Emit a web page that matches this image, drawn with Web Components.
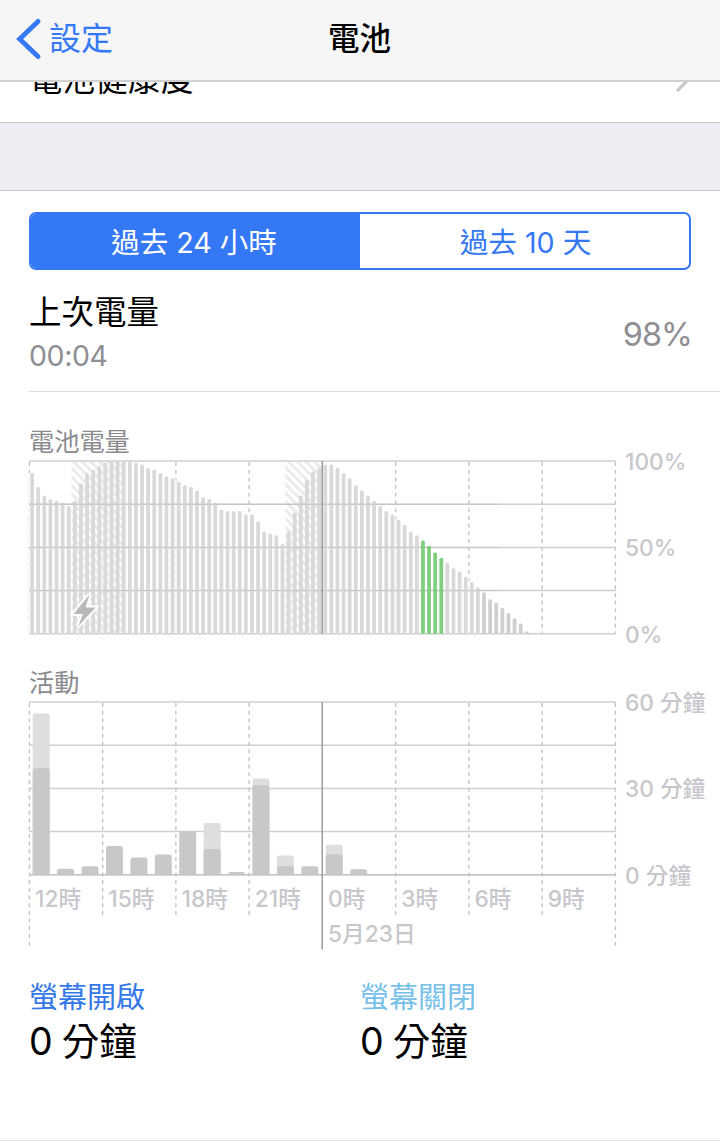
<!DOCTYPE html>
<html lang="zh-Hant">
<head>
<meta charset="utf-8">
<title>電池</title>
<style>
body{margin:0;background:#fff;font-family:Inter,"Noto Sans CJK TC",sans-serif;color:#000}
</style>
</head>
<body>
<battery-page></battery-page>
<script>
const define=(name,html,init)=>customElements.define(name,class extends HTMLElement{
  constructor(){super();this.attachShadow({mode:'open'}).innerHTML=html;}
  connectedCallback(){if(init)init(this,this.shadowRoot);}
});

define('nav-bar',`<style>
:host{display:grid;grid-template-columns:1fr auto 1fr;align-items:center;height:80px;border-bottom:2px solid #d0d0d1;background:#f6f6f7;box-sizing:content-box;line-height:40px}
.back{display:flex;align-items:center;color:#3478f6;font-size:32px;padding-left:15px;gap:8px}
svg{display:block}
.title{font-size:31.5px;font-weight:500;margin-left:-1px}
.back,.title{padding-bottom:2px}
</style><div class="back"><svg width="26" height="42" viewBox="0 0 26 42"><path d="M23 3.4 4.6 21 23 38.6" fill="none" stroke="#3478f6" stroke-width="4.8" stroke-linecap="round" stroke-linejoin="miter"/></svg><slot name="back"></slot></div><div class="title"><slot></slot></div>`);

define('list-row',`<style>
:host{display:flex;align-items:flex-end;justify-content:space-between;height:41px;box-sizing:border-box;overflow:hidden;padding:0 30px 25px 29.5px;font-size:32.8px;line-height:36px;border-bottom:1px solid #c8c7cc}
svg{flex:none;margin-bottom:4px}
</style><slot></slot><svg width="16" height="24" viewBox="0 0 16 24"><path d="M3 2 13 12 3 22" fill="none" stroke="#c4c4c9" stroke-width="3"/></svg>`);

define('segmented-control',`<style>
:host{display:grid;grid-template-columns:1fr 1fr;height:57.5px;box-sizing:border-box;border:2px solid #3478f6;border-radius:7px;overflow:hidden;font-size:28.6px;color:#3478f6}
div{display:flex;align-items:center;justify-content:center;padding-left:2px}
.on{background:#3478f6;color:#fff;padding:0 3px 0 0}
</style><div class="on"><slot name="first"></slot></div><div><slot name="second"></slot></div>`);

define('last-charge',`<style>
:host{display:flex;justify-content:space-between;align-items:center;height:122px;box-sizing:border-box;margin-left:29px;padding:8px 28px 0 0;border-bottom:1.5px solid #dcdcde}
.l{line-height:43px;font-size:32.5px}
.t{display:block;font-size:28.5px;color:#8e8e93;letter-spacing:-.4px}
.v{font-size:32.5px;color:#8e8e93;letter-spacing:-1px}
</style><div class="l"><slot></slot><span class="t"><slot name="time"></slot></span></div><div class="v"><slot name="value"></slot></div>`);

define('chart-scale',`<style>
:host{display:flex;flex-direction:column;justify-content:space-between;font-size:22.7px;font-weight:500;line-height:28px;color:#c7c7cc;white-space:nowrap;height:201px;margin-top:-12px;margin-left:9px}
</style><slot></slot>`);

const X0=.4,STEP=73.25,H=172.8;
const dash=(x,y1,y2)=>`<line x1="${x}" x2="${x}" y1="${y1}" y2="${y2}" stroke="#c4c4c6" stroke-width="1.4" stroke-dasharray="4 3.7"/>`;
const rows=()=>[0,1,2,3,4].map(i=>`<line x1="0" x2="587" y1="${1+i*H/4}" y2="${1+i*H/4}" stroke="#cfcfd0" stroke-width="1.5"/>`).join('');

define('level-chart',`<style>:host{display:block}svg{display:block;overflow:visible}</style><svg width="587" height="175"></svg>`,(el,root)=>{
  const v=[93,85,80,78,77,76,74,77,87,93,95,97,99,100,100,100,100,99,98,96,95,93,91,90,88,86,85,83,79,78,76,72,71,71,71,69,69,65,59,58,57,52,59,70,80,89,94,96,98,98,96,93,90,86,83,80,77,74,71,69,66,63,59,57,54,51,47,44,41,38,36,33,30,27,24,20,18,15,12,9,6,1.5];
  const p=6.107,top=i=>1+H*(1-v[i]/100);
  let s='<defs><pattern id="h" width="8.6" height="8.6" patternUnits="userSpaceOnUse"><path d="M-2 -2 10.6 10.6M-6.3 2.3 2.3 10.9M6.3 -2.3 10.9 2.3" stroke="#ebebec" stroke-width="3"/></pattern></defs>';
  for(let i=0;i<9;i++)if(i!==4)s+=dash(X0+i*STEP,2,H);
  s+=v.map((_,i)=>`<rect x="${i*p}" y="${top(i)}" width="${p+.1}" height="${1+H-top(i)}" fill="#fff"/>`).join('');
  s+=`<rect x="42.5" y="1" width="51" height="${H}" fill="url(#h)"/><rect x="256.3" y="1" width="37" height="${H}" fill="url(#h)"/>`;
  s+=rows();
  s+=v.map((_,i)=>{const x=1.2+i*p,g=i>63&&i<68,y=top(i),b=1+H;return `<path d="M${x} ${b}V${y+1.5}q0-1.5 1.5-1.5h.8q1.5 0 1.5 1.5V${b}z" fill="${g?'#7ed07e':i>73?'#cfcfcf':'#d9d9d9'}"/>`}).join('');
  s+=[1,2,3].map(i=>`<line x1="0" x2="470" y1="${1+i*H/4}" y2="${1+i*H/4}" stroke="#777" stroke-opacity=".1" stroke-width="1.4"/>`).join('');
  s+=`<line x1="293.2" x2="293.2" y1="1" y2="${1+H}" stroke="#959597" stroke-width="1.4"/>`;
  s+='<path d="M60.5 134.5 44.5 154h9.5L49 166.5 66.5 147.5h-10z" fill="#b9b9b9" stroke="#fff" stroke-width="4" stroke-linejoin="miter" paint-order="stroke"/>';
  root.querySelector('svg').innerHTML=s;
});

define('activity-chart',`<style>:host{display:block}svg{display:block;overflow:visible}
.x{display:grid;grid-template-columns:repeat(8,73.25px);padding-top:8px;font-size:22.7px;font-weight:500;line-height:30px;color:#c7c7cc}
.x span{padding-left:6px;white-space:nowrap}
.d{grid-column:5;margin-top:5px}
</style><svg width="587" height="175"></svg><div class="x"><span>12時</span><span>15時</span><span>18時</span><span>21時</span><span>0時</span><span>3時</span><span>6時</span><span>9時</span><span class="d">5月23日</span></div>`,(el,root)=>{
  const v=[[161.2,106.6],[6,6],[8.5,8.5],[28.8,28.8],[17.3,17.3],[20.2,20.2],[43.2,43.2],[51.7,25.9],[2.8,2.8],[96.2,89.5],[19.2,8.5],[8.5,8.5],[30,20.2],[5.5,5.5]];
  const bar=(x,h,c)=>{const r=Math.min(2.5,h),b=1+H;return `<path d="M${x} ${b}V${b-h+r}q0-${r} ${r}-${r}h${17-2*r}q${r} 0 ${r} ${r}V${b}z" fill="${c}"/>`};
  let s=rows();
  for(let i=0;i<9;i++)if(i!==4)s+=dash(X0+i*STEP,2,i%8?217:248);
  v.forEach(([t,d],i)=>{const x=3.7+i*24.42;if(t>d)s+=bar(x,t,'#dedede');s+=bar(x,d,'#c8c8c8')});
  s+=`<line x1="0" x2="587" y1="${1+H}" y2="${1+H}" stroke="#c6c6c7" stroke-width="1.4"/>`;
  s+='<line x1="293.2" x2="293.2" y1="1" y2="248.5" stroke="#959597" stroke-width="1.4"/>';
  root.querySelector('svg').innerHTML=s;
});

define('usage-total',`<style>
:host{display:block}
.k{font-size:29px;line-height:40px;color:var(--tone)}
.v{font-size:37.5px;line-height:48px;word-spacing:-1.5px}
</style><div class="k"><slot name="label"></slot></div><div class="v"><slot></slot></div>`);

define('battery-page',`<style>
:host{display:flex;flex-direction:column;width:720px;height:1141px;box-sizing:border-box;border-bottom:1px solid #e6e6e8;overflow:hidden;background:#fff}
:host>*{flex:none}
.gap{height:67px;background:#eeedf2;border-bottom:1px solid #c8c7cc}
segmented-control{margin:21px 29px 0}
h2{margin:0 0 2px 29px;font-size:25.2px;font-weight:400;line-height:32px;color:#8a8a8f}
.chart{display:flex;align-items:flex-start;margin-left:29px;height:175px}
.a{margin-top:34px}.b{margin-top:32px}
.totals{display:grid;grid-template-columns:331px 1fr;margin:102px 29px 0}
</style>
<nav-bar><span slot="back">設定</span>電池</nav-bar>
<list-row>電池健康度</list-row>
<div class="gap"></div>
<segmented-control><span slot="first">過去 24 小時</span><span slot="second">過去 10 天</span></segmented-control>
<last-charge>上次電量<span slot="time">00:04</span><span slot="value">98%</span></last-charge>
<h2 class="a">電池電量</h2>
<div class="chart"><level-chart></level-chart><chart-scale><span>100%</span><span>50%</span><span>0%</span></chart-scale></div>
<h2 class="b">活動</h2>
<div class="chart"><activity-chart></activity-chart><chart-scale><span>60 分鐘</span><span>30 分鐘</span><span>0 分鐘</span></chart-scale></div>
<div class="totals"><usage-total style="--tone:#3478e8"><span slot="label">螢幕開啟</span>0 分鐘</usage-total><usage-total style="--tone:#77c0ea"><span slot="label">螢幕關閉</span>0 分鐘</usage-total></div>`);
</script>
</body>
</html>
